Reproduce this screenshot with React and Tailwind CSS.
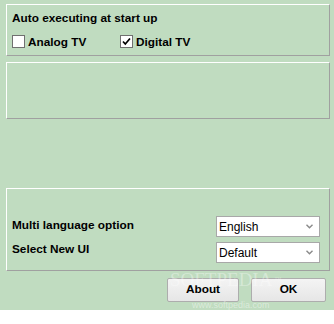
import React from "react";

const font = { fontFamily: '"Liberation Sans", Arial, sans-serif' };

function Checkbox({ checked, label }) {
  return (
    <div className="flex items-center h-[13px]">
      <div className="w-[13px] h-[13px] bg-white border border-[#707070] flex items-center justify-center shrink-0">
        {checked && (
          <svg width="9" height="9" viewBox="0 0 9 9">
            <path d="M1 4.5 L3.3 7 L8 1.5" stroke="#000" strokeWidth="1.7" fill="none" />
          </svg>
        )}
      </div>
      <span className="ml-[3px] text-[11.8px] font-bold leading-[14px] text-black">{label}</span>
    </div>
  );
}

function Select({ value }) {
  return (
    <div className="w-[104px] h-[21px] bg-white border border-[#a8a8a8] flex items-center justify-between pl-[2px] pr-[6px]">
      <span className="text-[12px] leading-[14px] text-black">{value}</span>
      <svg width="7" height="5" viewBox="0 0 7 5">
        <path d="M0.5 0.8 L3.5 3.8 L6.5 0.8" stroke="#8a8a8a" strokeWidth="1.4" fill="none" />
      </svg>
    </div>
  );
}

function Button({ children, w }) {
  return (
    <div
      className={`${w} h-[24px] rounded-[2px] border border-[#adadad] bg-gradient-to-b from-[#f4f4f4] to-[#e6e6e6] flex items-center justify-center text-[11.8px] font-bold text-black`}
    >
      {children}
    </div>
  );
}

const box = "border-t border-l border-t-white border-l-white border-b border-r border-b-[#a0a0a0] border-r-[#a0a0a0]";

export default function App() {
  return (
    <div className="w-[334px] h-[324px] bg-white relative overflow-hidden" style={font}>
      <div className="h-[310px] bg-[#c0dcc0] flex flex-col pt-[4px] pl-[6px] pr-[4px]">
        <div className={`${box} h-[52px] pl-[5px]`}>
          <div className="mt-[6px] text-[11.8px] font-bold leading-[14px] text-black">Auto executing at start up</div>
          <div className="mt-[10px] flex">
            <div className="w-[108px]">
              <Checkbox label="Analog TV" />
            </div>
            <Checkbox checked label="Digital TV" />
          </div>
        </div>
        <div className={`${box} h-[57px] mt-[6px]`} />
        <div className={`${box} h-[83px] mt-[69px] pl-[5px] pr-[9px] pt-[27px] flex flex-col gap-[5px]`}>
          <div className="flex justify-between items-start">
            <span className="mt-[2px] text-[11.8px] font-bold leading-[14px] text-black">Multi language option</span>
            <Select value="English" />
          </div>
          <div className="flex justify-between items-start">
            <span className="text-[11.8px] font-bold leading-[14px] text-black">Select New UI</span>
            <Select value="Default" />
          </div>
        </div>
        <div className="mt-[7px] flex justify-end gap-[12px] pr-[4px]">
          <Button w="w-[72px]">About</Button>
          <Button w="w-[75px]">OK</Button>
        </div>
      </div>
      <div className="absolute left-[170px] top-[270px] w-[140px] pointer-events-none select-none">
        <div className="text-[19px] leading-[20px] text-white/35" style={{ fontFamily: '"Liberation Serif", serif' }}>
          SOFTPEDIA<span className="text-[7px] align-top ml-[2px]">™</span>
        </div>
        <div className="mt-[10px] ml-[22px] text-[9px] leading-[10px] text-white/45">www.softpedia.com</div>
      </div>
    </div>
  );
}
